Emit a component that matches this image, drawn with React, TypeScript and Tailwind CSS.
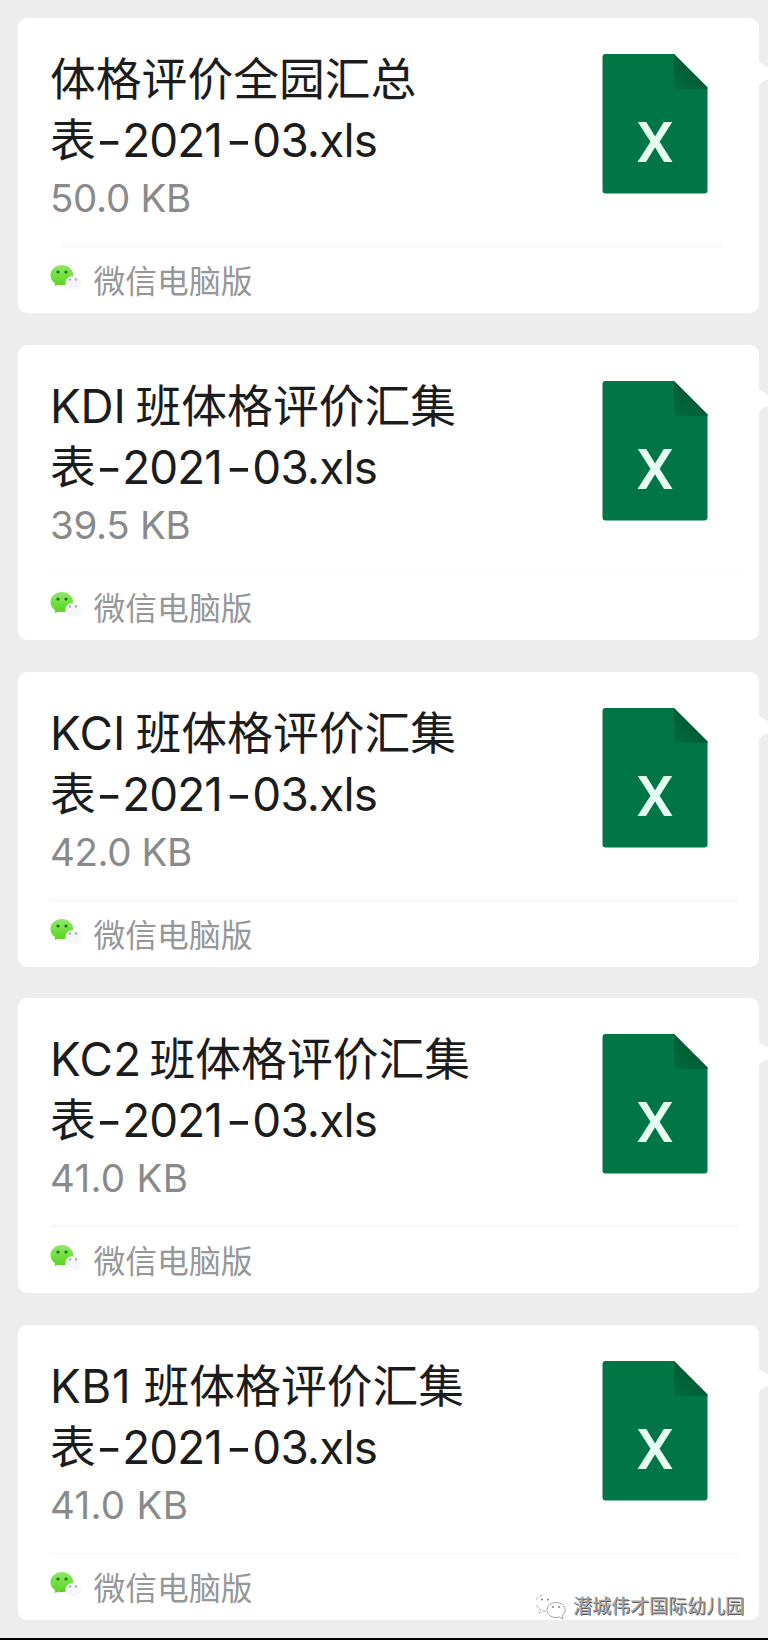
interface FileItem {
  prefix: string
  prefixClass: string
  title: string
  size: string
  sizeClass: string
  dividerClass: string
}

const FILES: FileItem[] = [
  {
    prefix: '',
    prefixClass: '',
    title: '体格评价全园汇总',
    size: '50.0 KB',
    sizeClass: 'tracking-[-0.3px]',
    dividerClass: 'ml-3 w-[660px] bg-[#f9f9f9]',
  },
  {
    prefix: 'KDI',
    prefixClass: 'w-[85.500px] tracking-[-0.2px]',
    title: '班体格评价汇集',
    size: '39.5 KB',
    sizeClass: 'tracking-[-0.3px]',
    dividerClass: 'w-[688px] bg-[#fcfcfc]',
  },
  {
    prefix: 'KCI',
    prefixClass: 'w-[85.500px] tracking-[0.2px]',
    title: '班体格评价汇集',
    size: '42.0 KB',
    sizeClass: 'tracking-[-0.4px]',
    dividerClass: 'w-[688px] bg-[#f9f9f9]',
  },
  {
    prefix: 'KC2',
    prefixClass: 'w-[99.500px] tracking-[0.3px]',
    title: '班体格评价汇集',
    size: '41.0 KB',
    sizeClass: 'tracking-[0.3px]',
    dividerClass: 'w-[688px] bg-[#f9f9f9]',
  },
  {
    prefix: 'KB1',
    prefixClass: 'w-[93.500px] tracking-[0.6px]',
    title: '班体格评价汇集',
    size: '41.0 KB',
    sizeClass: 'tracking-[0.3px]',
    dividerClass: 'w-[688px] bg-[#fbfbfb]',
  },
]

function ExcelIcon() {
  return (
    <svg width="106" height="140" viewBox="0 0 106 140" className="shrink-0">
      <defs>
        <linearGradient id="fold" x1="1" y1="0" x2="0" y2="1">
          <stop offset="0.4" stopColor="#005a32" />
          <stop offset="1" stopColor="#006c40" />
        </linearGradient>
      </defs>
      <path d="M3.500 0H72L105.500 33.500V136.500a3 3 0 0 1-3 3H3.500a3 3 0 0 1-3-3V3a3 3 0 0 1 3-3Z" fill="#007546" />
      <path d="M72 0L105.500 33.500V35H75a3 3 0 0 1-3-3Z" fill="url(#fold)" />
      <text
        x="53"
        y="108"
        textAnchor="middle"
        textLength="37"
        lengthAdjust="spacingAndGlyphs"
        fontFamily="Roboto, sans-serif"
        fontSize="56"
        fontWeight="500"
        fill="#e6fff2"
      >
        X
      </text>
    </svg>
  )
}

function WechatIcon() {
  return (
    <svg width="32" height="28" viewBox="0 0 32 28" className="shrink-0">
      <defs>
        <linearGradient id="bubble" x1="0" y1="0" x2="0" y2="1">
          <stop offset="0" stopColor="#8fe86a" />
          <stop offset="1" stopColor="#58d41c" />
        </linearGradient>
      </defs>
      <path
        d="M12 0C5.500 0 .5 4.300 .5 10.200c0 3.300 1.800 6.200 4.700 8L4.800 21l3.800-1.300c1.100.2 2.200.4 3.400.4 6.300 0 11.200-4.300 11.200-9.900C23.200 4.300 18.300 0 12 0Z"
        fill="url(#bubble)"
      />
      <circle cx="8" cy="7" r="1.600" fill="#226b10" />
      <circle cx="16" cy="7" r="1.600" fill="#226b10" />
      <path
        d="M23.500 11c-4.600 0-8 2.900-8 6.700s3.400 6.700 8 6.700c.9 0 1.700-.1 2.500-.3l2.700 1.500-.5-2.500c2-1.200 3.300-3.200 3.300-5.400 0-3.800-3.400-6.700-8-6.700Z"
        fill="#f5f6f7"
      />
      <circle cx="20" cy="14.500" r="1.200" fill="#a9b0a9" />
      <circle cx="26" cy="14.500" r="1.200" fill="#a9b0a9" />
    </svg>
  )
}

function FileCard({ file }: { file: FileItem }) {
  return (
    <div className="relative flex h-[295px] w-[741px] flex-col rounded-[9px] bg-white pl-8">
      {/* bubble tail, runs off the right edge */}
      <svg width="10" height="28" viewBox="0 0 10 28" className="absolute top-[42px] left-[740px]">
        <path d="M0 0C1 3 6 5 10 7.500V19.500C6 20 1 23 0 28Z" fill="#ffffff" />
      </svg>

      <div className="flex h-[227px] justify-between pr-[50.500px]">
        <div className="flex flex-col pt-[31px] pl-[0.500px]">
          <div className="flex h-[61px] items-center text-[45.800px] leading-[61px] whitespace-nowrap text-[#1c1c1c]">
            {file.prefix && <span className={file.prefixClass}>{file.prefix}</span>}
            <span>{file.title}</span>
          </div>
          <div className="flex h-[61px] items-center text-[45.800px] leading-[61px] whitespace-nowrap text-[#1c1c1c]">
            <span>表</span>
            <span className="w-[26.500px] scale-x-125 text-center">-</span>
            <span className="w-[104px] tracking-[-0.9px]">2021</span>
            <span className="w-[26px] scale-x-125 text-center">-</span>
            <span className="tracking-[-0.8px]">03.xls</span>
          </div>
          <div className={`-mt-px h-[56px] text-[38.500px] leading-[56px] text-[#8a8a8a] ${file.sizeClass}`}>{file.size}</div>
        </div>
        <div className="pt-9">
          <ExcelIcon />
        </div>
      </div>

      <div className={`h-[3px] ${file.dividerClass}`} />

      <div className="flex h-[62px] items-start pt-[17px]">
        <WechatIcon />
        <span className="ml-3 h-[34px] text-[31.800px] leading-[34px] text-[#979797]">微信电脑版</span>
      </div>
    </div>
  )
}

function Watermark() {
  return (
    <div className="absolute top-[1593px] left-[535px] flex items-center gap-1.5">
      <svg width="32" height="28" viewBox="0 0 32 28" fill="#ffffff" stroke="#8f8f8f" strokeWidth="0.8">
        <path d="M2 12c.5 2 1.800 3.500 3.500 4.500L4 20l4-2c1 .3 2 .4 3 .4M1.500 6.500C2.500 4 4.500 2.800 7 2" strokeDasharray="3 1.500" />
        <path d="M21 9.500c-5 0-9 3.300-9 7.500s4 7.500 9 7.500c1.200 0 2.300-.2 3.300-.5l3.700 2-1-3.300c2-1.400 3.200-3.400 3.200-5.700 0-4.200-4.200-7.500-9.200-7.500Z" />
        <g fill="#777777" stroke="none">
          <circle cx="7" cy="6.500" r="0.900" />
          <circle cx="13" cy="6.500" r="0.900" />
          <circle cx="18" cy="14" r="0.900" />
          <circle cx="24" cy="14" r="0.900" />
        </g>
      </svg>
      <span className="text-[19px] leading-7 whitespace-nowrap text-[#a8a8a8] [text-shadow:1px_1px_0_#5c5c5c]">
        潜城伟才国际幼儿园
      </span>
    </div>
  )
}

function App() {
  return (
    <div className="relative flex h-[1640px] w-[768px] flex-col overflow-hidden border-b-2 border-black bg-[#ededed] font-[Inter,'Noto_Sans_CJK_SC',sans-serif]">
      <div className="flex flex-col gap-[31.800px] pt-[18px] pl-[17.500px]">
        {FILES.map((file) => (
          <FileCard key={file.prefix || file.title} file={file} />
        ))}
      </div>
      <Watermark />
    </div>
  )
}

export default App
